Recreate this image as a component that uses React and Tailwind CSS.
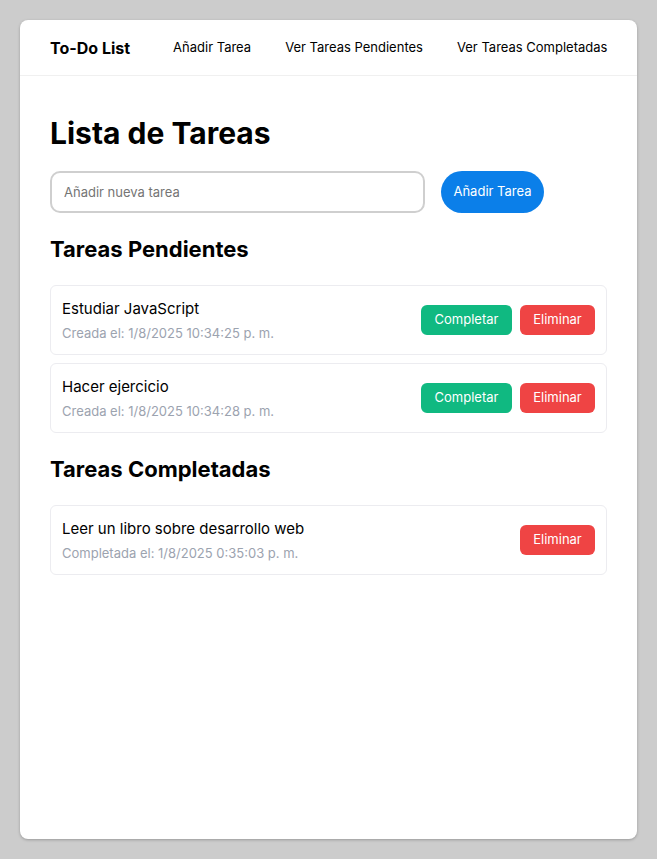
import React from 'react';

const pendientes = [
  { id: 1, title: 'Estudiar JavaScript', date: 'Creada el: 1/8/2025 10:34:25 p. m.' },
  { id: 2, title: 'Hacer ejercicio', date: 'Creada el: 1/8/2025 10:34:28 p. m.' }
];

const completadas = [
  { id: 3, title: 'Leer un libro sobre desarrollo web', date: 'Completada el: 1/8/2025 0:35:03 p. m.' }
];

function TaskCard({ task, done }) {
  return (
    <div className="flex items-center justify-between h-[70px] px-[11px] rounded-md border border-[#ececf0] bg-white">
      <div className="flex flex-col pt-[2px]">
        <span className="text-[15px] leading-5 text-black">{task.title}</span>
        <span className="text-[13px] leading-5 mt-1 text-[#9ca3af]">{task.date}</span>
      </div>
      <div className="flex gap-2">
        {!done && (
          <button className="h-[30px] w-[91px] rounded-md bg-[#10b981] text-white text-[13px]">Completar</button>
        )}
        <button className="h-[30px] w-[75px] rounded-md bg-[#ef4444] text-white text-[13px]">Eliminar</button>
      </div>
    </div>
  );
}

export default function App() {
  return (
    <div className="min-h-screen bg-[#cccccc] p-[20px] font-['Inter',sans-serif]">
      <div className="h-[819px] bg-white rounded-lg shadow-[0_1px_3px_rgba(0,0,0,0.25)] flex flex-col">
        {/* header */}
        <div className="flex items-center h-[56px] pt-[1px] px-[30px] border-b border-[#f0f0f0] shrink-0 whitespace-nowrap">
          <span className="text-[16px] font-bold text-black shrink-0">To-Do List</span>
          <nav className="flex gap-[34px] ml-[43px] text-[13px] text-black shrink-0">
            <span>Añadir Tarea</span>
            <span>Ver Tareas Pendientes</span>
            <span>Ver Tareas Completadas</span>
          </nav>
        </div>

        {/* main */}
        <div className="px-[30px] pt-[39px] flex flex-col">
          <h1 className="text-[30px] leading-9 font-bold text-black">Lista de Tareas</h1>

          <div className="flex items-center gap-4 mt-[20px]">
            <input
              className="w-[375px] h-[42px] rounded-[10px] border-2 border-[#cfcfcf] px-3 text-[13px] outline-none placeholder:text-[#757575]"
              placeholder="Añadir nueva tarea"
            />
            <button className="h-[42px] w-[103px] rounded-full bg-[#0b7fe9] text-white text-[13px]">Añadir Tarea</button>
          </div>

          <h2 className="text-[22px] leading-7 font-bold text-black mt-[22px]">Tareas Pendientes</h2>
          <div className="flex flex-col gap-2 mt-[22px]">
            {pendientes.map(t => (
              <TaskCard key={t.id} task={t} />
            ))}
          </div>

          <h2 className="text-[22px] leading-7 font-bold text-black mt-[22px]">Tareas Completadas</h2>
          <div className="flex flex-col gap-2 mt-[22px]">
            {completadas.map(t => (
              <TaskCard key={t.id} task={t} done />
            ))}
          </div>
        </div>
      </div>
    </div>
  );
}
